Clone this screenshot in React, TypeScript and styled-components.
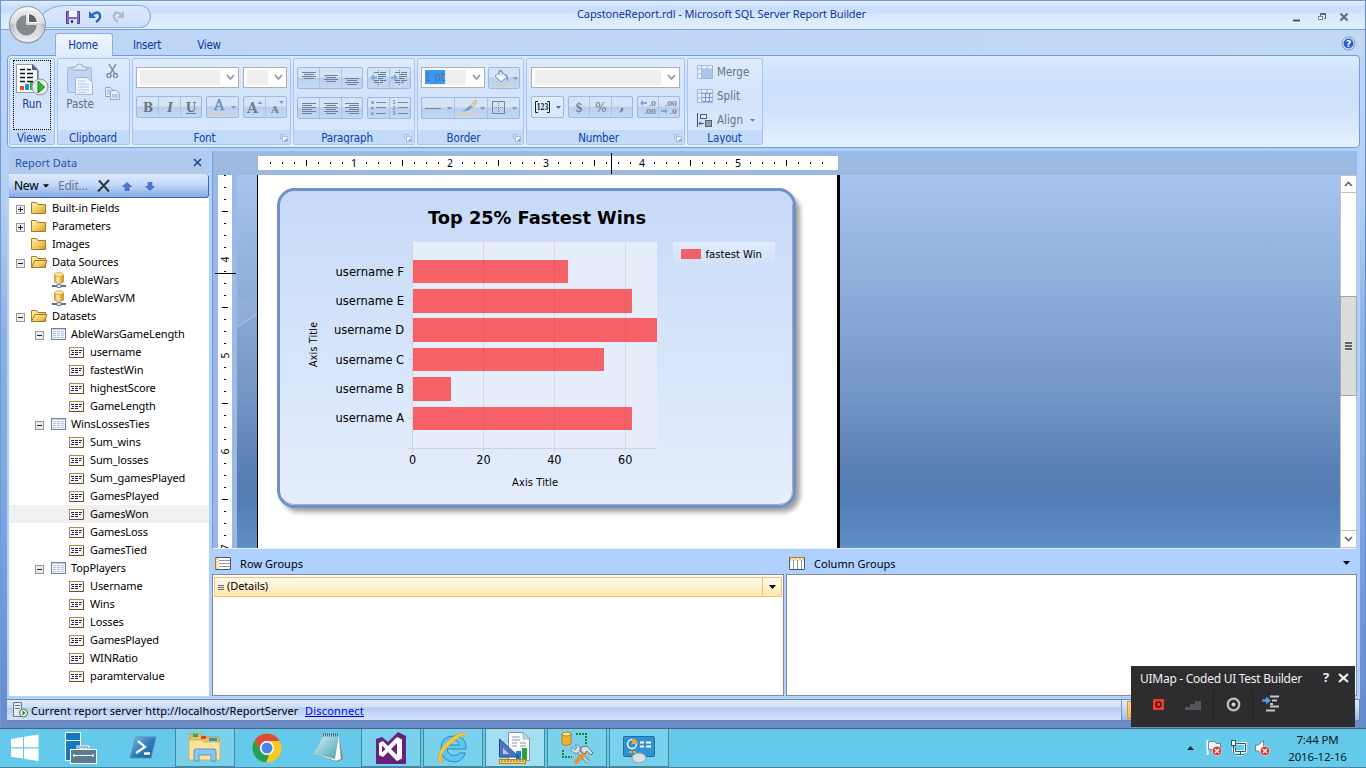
import React from "react";
import styled, { createGlobalStyle, css } from "styled-components";

const Global = createGlobalStyle`
  * { box-sizing: border-box; }
  html, body { margin: 0; padding: 0; }
  body { width: 1366px; height: 768px; overflow: hidden; }
  svg { display: block; flex: none; }
`;

const SEGOE = `"Noto Sans", "Open Sans", sans-serif`;
const TAHOMA = `"DejaVu Sans Condensed", "DejaVu Sans", sans-serif`;

const Screen = styled.div`
  width: 1366px;
  height: 768px;
  display: flex;
  flex-direction: column;
  font-family: ${SEGOE};
  font-size: 11px;
  color: #000;
  white-space: nowrap;
`;

const Window = styled.div`
  position: relative;
  height: 728px;
  display: flex;
  flex-direction: column;
  border-top: 1px solid #6f98dc;
  border-left: 1px solid #6f98dc;
  border-right: 1px solid #5f8bd0;
  background: linear-gradient(#c1d8f8 0, #bfd5f6 60px, #b3cff0 200px, #8fb2e3 330px, #7ea3dc 520px, #6b8dcb 700px);
`;

/* ---------- title bar and tabs ---------- */
const TitleBar = styled.div`
  height: 29px;
  display: flex;
  align-items: flex-start;
  border-bottom: 1px solid #7ba1e0;
  background: linear-gradient(#e4efff 0, #cbdffc 5px, #c9defb 10px, #d6e8fc 14px, #e2f0fd 28px);
`;
const QuickAccess = styled.div`
  width: 114px;
  height: 23px;
  margin: 4px 0 0 36px;
  padding: 4px 0 0 28px;
  display: flex;
  gap: 8px;
  border: 1px solid #8bb0e6;
  border-radius: 30px 12px 12px 0 / 22px 12px 12px 0;
  background: linear-gradient(#dbe9fc, #cfe1fa);
`;
const Title = styled.div`
  flex: 1;
  padding: 5px 0 0 0;
  margin-left: 426px;
  line-height: 15px;
  font-size: 11px;
  letter-spacing: -0.12px;
  color: #0d35a0;
`;
const Controls = styled.div`
  width: 73px;
  padding-top: 10px;
`;
const Orb = styled.div`
  position: absolute;
  left: 7px;
  top: 4px;
`;
const Tabs = styled.div`
  height: 25px;
  padding: 3px 9px 0 54px;
  display: flex;
  background: linear-gradient(90deg, #bed6f5, #c1d6f7 60%, #c3d9f3);
`;
const Tab = styled.div<{ $on?: boolean; $w: number }>`
  width: ${(p) => p.$w}px;
  height: 23px;
  padding-right: 2px;
  line-height: ${(p) => (p.$on ? 22 : 24)}px;
  text-align: center;
  font-family: ${TAHOMA};
  font-size: 11.5px;
  letter-spacing: -0.25px;
  color: #0d35a0;
  ${(p) =>
    p.$on &&
    css`
      position: relative;
      z-index: 1;
      border: 1px solid #8aaee6;
      border-bottom: 0;
      border-radius: 3px 3px 0 0;
      background: linear-gradient(#eef5fe, #e0ecfd);
    `}
`;
const HelpSlot = styled.div`
  margin: 3px 0 0 auto;
`;

/* ---------- ribbon ---------- */
const Ribbon = styled.div`
  height: 93px;
  margin: 0 5px 0 6px;
  padding: 2px 1px;
  display: flex;
  border: 1px solid #749bdc;
  border-radius: 4px;
  background: linear-gradient(#dbebfe 0, #cde2fc 20px, #cbe0fb 32px, #cfe3fd 55px, #dceafe 75px, #e4f0ff);
`;
const Group = styled.div<{ $w: number }>`
  width: ${(p) => p.$w}px;
  height: 87px;
  margin-right: 2px;
  display: flex;
  flex-direction: column;
  border: 1px solid #a4c5f5;
  border-radius: 2px;
  overflow: hidden;
  background: linear-gradient(#deebfd, #d2e3fa 45%, #dbe9fd);
`;
const GroupBody = styled.div<{ $pad?: string; $gap?: number }>`
  flex: 1;
  padding: ${(p) => p.$pad ?? "8px 3px 0"};
  display: flex;
  flex-direction: column;
  gap: ${(p) => p.$gap ?? 8}px;
`;
const GroupName = styled.div`
  height: 14px;
  display: flex;
  align-items: center;
  background: #c3daf9;
  font-family: ${TAHOMA};
  font-size: 11.5px;
  letter-spacing: -0.15px;
  color: #1440a8;
`;
const NameText = styled.span<{ $shift: number }>`
  flex: 1;
  padding: 3px ${(p) => p.$shift}px 0 0;
  line-height: 13px;
  text-align: center;
`;
const Row = styled.div<{ $gap?: number }>`
  display: flex;
  gap: ${(p) => p.$gap ?? 4}px;
`;
const Combo = styled.div<{ $w: number }>`
  width: ${(p) => p.$w}px;
  height: 21px;
  padding: 2px 3px 2px 3px;
  display: flex;
  align-items: center;
  justify-content: space-between;
  border: 1px solid #a9b0b8;
  background: #fff;
`;
const Field = styled.div<{ $w: number }>`
  width: ${(p) => p.$w}px;
  height: 15px;
  background: #efefef;
  font-family: ${TAHOMA};
  font-size: 11.5px;
  line-height: 14px;
  color: #6d7076;
`;
const Selected = styled.span`
  display: inline-block;
  width: 20px;
  height: 14px;
  letter-spacing: -0.1px;
  background: #3399ff;
`;
const ButtonSet = styled.div<{ $live?: boolean }>`
  display: flex;
  height: 22px;
  border: 1px solid #9bb9e3;
  border-radius: 2px;
  background: ${(p) =>
    p.$live ? "linear-gradient(#e4effd, #d9e7fb)" : "linear-gradient(#d6e5f6 0, #d6e5f6 45%, #b8cfec 50%, #c5d9f3)"};
`;
const Tool = styled.div<{ $w: number; $gap?: number }>`
  width: ${(p) => p.$w}px;
  display: flex;
  align-items: center;
  justify-content: center;
  gap: ${(p) => p.$gap ?? 0}px;
  border-right: 1px solid #a9c4e8;
  &:last-child { border-right: 0; }
`;
const BigTool = styled.div<{ $focus?: boolean; $w: number }>`
  width: ${(p) => p.$w}px;
  height: 70px;
  padding-top: 2px;
  display: flex;
  flex-direction: column;
  align-items: center;
  border: 1px ${(p) => (p.$focus ? "dotted #000" : "solid transparent")};
`;
const ToolCaption = styled.div<{ $dim?: boolean }>`
  font-family: ${TAHOMA};
  font-size: 11.5px;
  letter-spacing: -0.1px;
  line-height: 15px;
  color: ${(p) => (p.$dim ? "#65707f" : "#1440a8")};
`;
const LayoutItem = styled.div`
  height: 16px;
  display: flex;
  align-items: center;
  gap: 4px;
  font-family: ${TAHOMA};
  font-size: 11.5px;
  letter-spacing: 0;
  color: #6b7280;
`;

/* ---------- work area ---------- */
const Work = styled.div`
  height: 551px;
  margin: 0 5px 0 6px;
  padding: 3px 3px 3px 2px;
  display: flex;
  background: #aed1ff;
`;
const DataPanel = styled.div`
  width: 200px;
  height: 545px;
  display: flex;
  flex-direction: column;
  background: #fff;
`;
const PanelHead = styled.div`
  height: 23px;
  padding: 0 7px 0 6px;
  display: flex;
  align-items: center;
  justify-content: space-between;
  background: #b1caee;
  font-size: 11px;
  color: #2253b5;
`;
const PanelTools = styled.div`
  height: 24px;
  padding-left: 5px;
  display: flex;
  align-items: center;
  border-bottom: 1px solid #3c66b4;
  border-right: 1px solid #3c66b4;
  border-radius: 3px 3px 3px 0;
  background: linear-gradient(#dfeafc, #c4d9f8 45%, #86aae4);
  font-size: 12px;
`;
const Dim = styled.span`
  width: 39px;
  margin-left: 9px;
  letter-spacing: -0.25px;
  color: #6d7787;
`;
const NewLabel = styled.span`
  width: 29px;
  letter-spacing: -0.25px;
`;
const Tree = styled.div`
  padding-top: 1px;
`;
const Node = styled.div<{ $depth: number; $sel?: boolean }>`
  height: 18px;
  padding-left: ${(p) => 7 + p.$depth * 19}px;
  display: flex;
  align-items: center;
  background: ${(p) => (p.$sel ? "#f0f0f0" : "transparent")};
`;
const Twist = styled.div<{ $w: number }>`
  width: ${(p) => p.$w}px;
  height: 9px;
  margin-top: 3px;
`;
const NodeIcon = styled.div<{ $w: number }>`
  width: ${(p) => p.$w}px;
`;
const NodeText = styled.span`
  font-size: 11px;
  letter-spacing: -0.12px;
  line-height: 16px;
`;

const Main = styled.div`
  width: 1145px;
  margin-left: 3px;
  display: flex;
  flex-direction: column;
`;
const Designer = styled.div`
  height: 398px;
  display: flex;
  flex-direction: column;
  border-left: 1px solid #6f9adb;
  border-bottom: 1px solid #e4effb;
`;
const TopRuler = styled.div`
  height: 24px;
  padding-left: 45px;
  background: #9bb9e1;
`;
const Canvas = styled.div`
  height: 373px;
  display: flex;
`;
const SideRuler = styled.div`
  width: 24px;
  background: #9bb9e1;
`;
const Surface = styled.div`
  flex: 1;
  display: flex;
  overflow: hidden;
  background: linear-gradient(#a6c6ef 0, #9bbbe6 50px, #87a8d6 140px, #7195c5 225px, #5a80b6 290px, #527db4 325px, #5882bb 342px, #6090c6 373px);
`;
const Margin = styled.div`
  width: 20px;
  padding-top: 112px;
`;
const Paper = styled.div`
  width: 583px;
  border-left: 1px solid #000;
  border-right: 3px solid #000;
  background: #fff;
`;
const Scroll = styled.div`
  width: 17px;
  display: flex;
  flex-direction: column;
  border: 1px solid #c3c3c3;
  background: #fff;
`;
const ScrollEnd = styled.div`
  height: 16px;
  display: flex;
  align-items: center;
  justify-content: center;
`;
const ScrollTrack = styled.div`
  flex: 1;
  padding-top: 103px;
  border-top: 1px solid #c3c3c3;
  border-bottom: 1px solid #c3c3c3;
`;
const Thumb = styled.div`
  height: 100px;
  display: flex;
  align-items: center;
  justify-content: center;
  border: 1px solid #a6a6a6;
  margin: 0 -1px;
  background: #dcdcdc;
`;

const Groups = styled.div`
  flex: 1;
  display: flex;
  gap: 2px;
`;
const GroupPane = styled.div<{ $w: number }>`
  width: ${(p) => p.$w}px;
  display: flex;
  flex-direction: column;
`;
const PaneHead = styled.div`
  height: 25px;
  padding: 3px 7px 0 3px;
  display: flex;
  align-items: center;
  font-size: 11px;
`;
const PaneTitle = styled.span`
  flex: 1;
  margin-left: 9px;
  letter-spacing: 0.05px;
`;
const PaneBox = styled.div`
  flex: 1;
  padding: 2px 1px;
  border: 1px solid #848a96;
  background: #fff;
`;
const DetailRow = styled.div`
  height: 20px;
  display: flex;
  align-items: center;
  border: 1px solid #fdc06c;
  background: linear-gradient(#fffaf0, #fef1d0 50%, #ffe8ae);
`;
const DetailText = styled.span`
  flex: 1;
  margin-top: -3px;
  font-size: 11px;
  letter-spacing: -0.1px;
`;
const DropCell = styled.div`
  width: 19px;
  height: 18px;
  display: flex;
  align-items: center;
  justify-content: center;
  border-left: 1px solid #fdc06c;
`;

const Status = styled.div`
  height: 22px;
  margin: 0 5px 0 5px;
  padding-left: 5px;
  display: flex;
  align-items: center;
  border: 1px solid #7385aa;
  background: linear-gradient(#dfeafb 0, #cfe0f9 7px, #b5cdf2 8px, #d3e2fa 20px);
  font-size: 11px;
`;
const StatusText = styled.span`
  width: 277px;
  padding-left: 3px;
  letter-spacing: 0.06px;
`;
const StatusLink = styled.span`
  color: #0000f0;
  letter-spacing: 0.18px;
  text-decoration: underline;
`;
const ZoomEdge = styled.div`
  width: 238px;
  height: 20px;
  margin-left: auto;
  border-left: 1px solid #7792c4;
  background: linear-gradient(#e4eefd, #9dbcf0);
`;
const Amber = styled.div`
  width: 30px;
  height: 18px;
  margin: 1px 0 0 5px;
  border: 1px solid #c79a4c;
  background: linear-gradient(#fbd79a, #f7ac42);
`;

/* ---------- floating recorder ---------- */
const Recorder = styled.div`
  position: absolute;
  left: 1131px;
  top: 666px;
  width: 224px;
  height: 61px;
  display: flex;
  flex-direction: column;
  background: #2d2d30;
  color: #f1f1f1;
`;
const RecorderHead = styled.div`
  height: 23px;
  padding: 1px 6px 0 9px;
  display: flex;
  align-items: center;
  font-size: 12px;
`;
const RecorderName = styled.span`
  flex: 1;
  letter-spacing: -0.27px;
`;
const Bold = styled.b`
  width: 15px;
  font-size: 13px;
  line-height: 20px;
  margin-top: -2px;
`;
const RecorderTools = styled.div`
  height: 30px;
  display: flex;
  align-items: center;
`;
const RecCell = styled.div<{ $w: number; $line?: boolean; $pad: number }>`
  width: ${(p) => p.$w}px;
  height: 31px;
  padding-left: ${(p) => p.$pad}px;
  display: flex;
  align-items: center;
  border-right: 1px solid ${(p) => (p.$line ? "#222224" : "transparent")};
`;

/* ---------- taskbar ---------- */
const Taskbar = styled.div`
  height: 40px;
  display: flex;
  border-top: 1px solid #4d646e;
  border-bottom: 1px solid #4a8298;
  background: #64c9ea;
`;
const Start = styled.div`
  width: 51px;
  padding-left: 11px;
  display: flex;
  align-items: center;
`;
const TaskButton = styled.div<{ $state?: "open" | "active" }>`
  width: 60px;
  margin-right: 2px;
  display: flex;
  align-items: center;
  justify-content: center;
  ${(p) =>
    p.$state &&
    css`
      border: 1px solid #46899f;
      border-top: 0;
      background: ${p.$state === "active" ? "#a2dff3" : "#79d1ec"};
    `}
`;
const Tray = styled.div`
  margin-left: auto;
  display: flex;
  align-items: center;
`;
const Clock = styled.div`
  width: 83px;
  margin-left: 5px;
  padding-right: 14px;
  text-align: center;
  font-size: 11.5px;
  line-height: 17px;
  letter-spacing: -0.15px;
  color: #0c1a20;
`;

/* ---------- small drawings ---------- */
const Chevron = ({ c = "#9a9a9a" }: { c?: string }) => (
  <svg width="9" height="7" viewBox="0 0 9 7"><path d="M1 1l3.5 4L8 1" fill="none" stroke={c} strokeWidth="1.8" /></svg>
);
const Down = ({ c = "#7f9cc9", w = 5 }: { c?: string; w?: number }) => (
  <svg width={w} height={w === 5 ? 3 : 4} viewBox="0 0 6 3.4"><path d="M0 0h6L3 3.4z" fill={c} /></svg>
);
const Launcher = () => (
  <svg width="11" height="9" viewBox="0 0 11 9">
    <path d="M1.5 6V1.5H6" fill="none" stroke="#9fbce4" />
    <path d="M3.5 3.5h5v5h-5z" fill="#f5f9ff" stroke="#9fbce4" />
    <path d="M5 8h3V5z" fill="#93a9cc" />
  </svg>
);
const Lines = ({ y, a = "c" }: { y: number[]; a?: string }) => (
  <svg width="16" height="16" viewBox="0 0 16 16">
    {y.map((v, i) => {
      const w = i % 2 === 0 ? 14 : 10;
      const x = a === "l" ? 1 : a === "r" ? 15 - w : (16 - w) / 2;
      return <rect key={v} x={x} y={v} width={w} height="1" fill="#6f7f99" />;
    })}
  </svg>
);
const Indent = ({ out }: { out?: boolean }) => (
  <svg width="18" height="16" viewBox="0 0 18 16">
    <path d="M4 2.500h4m2 0h6M9 4.500h7M9 6.500h7M9 8.500h4M4 10.500h4m2 0h6M4 12.500h4m2 0h3" stroke="#69798f" />
    <path d="M8.500 0v16" stroke="#69798f" strokeDasharray="1 1" />
    <path d={out ? "M0 7.500l4-3.500v2.500h3v2H4v2.500z" : "M7 7.500l-4-3.500v2.500H0v2h3v2.500z"} fill="#86a8dd" />
  </svg>
);
const List = ({ num }: { num?: boolean }) => (
  <svg width="17" height="18" viewBox="0 0 17 18">
    <path d="M6 3.500h10M6 8.500h10M6 14.500h10" stroke="#75859c" />
    {[3.500, 9, 14.500].map((y, i) =>
      num ? (
        <text key={y} x="0.500" y={y + 1.700} fontSize="5.300" fontWeight="bold" fontFamily="Liberation Sans" fill="#6c90cc">{i + 1}</text>
      ) : (
        <circle key={y} cx="2.500" cy={y} r="1.500" fill="#7a9cd3" />
      )
    )}
  </svg>
);
const Glyph = ({ t, style, u }: { t: string; style?: string; u?: boolean }) => (
  <svg width="16" height="18" viewBox="0 0 16 18">
    <text x="8" y="13.500" textAnchor="middle" fontFamily="DejaVu Serif" fontSize="12" fontWeight={t === "%" || t === "$" ? "normal" : "bold"} fontStyle={style} fill="#667387">{t}</text>
    {u && <path d="M3 15.500h10" stroke="#6f7c90" />}
  </svg>
);
const Comma = () => (
  <svg width="16" height="20" viewBox="0 0 16 20">
    <text x="8" y="13" textAnchor="middle" fontFamily="DejaVu Serif" fontSize="14" fontWeight="bold" fill="#667387">,</text>
  </svg>
);
const FontStep = ({ up }: { up?: boolean }) => (
  <svg width="17" height="18" viewBox="0 0 17 18">
    <text x={up ? 6.5 : 7} y="15" textAnchor="middle" fontFamily="DejaVu Serif" fontSize={up ? 14 : 10} fontWeight="bold" fill="#6f7c90">A</text>
    <path d={up ? "M11.500 6h5l-2.500-3z" : "M11 3h5l-2.500 3z"} fill="#7f9fd4" />
  </svg>
);
const FontColor = () => (
  <svg width="20" height="20" viewBox="0 0 20 20">
    <text x="10" y="13" textAnchor="middle" fontFamily="DejaVu Serif" fontSize="14" fill="#6c8cc5" stroke="#6c8cc5" strokeWidth=".4">A</text>
    <rect x="1" y="15" width="17" height="4" fill="#cfd0d2" />
  </svg>
);
const Bucket = () => (
  <svg width="20" height="20" viewBox="0 0 20 20">
    <path d="M4 8l6-5 6 6-6 5z" fill="#eef3fa" stroke="#8192ac" />
    <path d="M8 7V3q1.500-2 3 0v4" fill="none" stroke="#8192ac" />
    <path d="M13 6q5 0 4 7-2-1-1-4z" fill="#6d93cf" />
    <rect x="1" y="15" width="17" height="4" fill="#cfd0d2" />
  </svg>
);
const Brush = () => (
  <svg width="20" height="20" viewBox="0 0 20 20">
    <path d="M12 8l5-6 2 1-4 7z" fill="#e8d39a" stroke="#b3a376" strokeWidth=".6" />
    <path d="M2 13q5 0 7-3 3-4 5-1-2 5-12 4z" fill="#7398d6" />
    <rect x="1" y="14" width="17" height="4" fill="#cfd0d2" />
  </svg>
);
const Border = () => (
  <svg width="16" height="16" viewBox="0 0 16 16">
    <rect x="1.500" y="1.500" width="12" height="12" fill="none" stroke="#75859c" />
    <path d="M7.500 3v10M3 7.500h10" stroke="#75859c" strokeDasharray="1 1" />
  </svg>
);
const Decimals = ({ grow }: { grow?: boolean }) => (
  <svg width="18" height="20" viewBox="0 0 18 20" fontFamily="DejaVu Serif" fontSize="7" fontWeight="bold" fill="#808a9a">
    <text x="17" y="8.500" textAnchor="end">{grow ? ".0" : ".00"}</text>
    <text x="17" y="17" textAnchor="end">{grow ? ".00" : ".0"}</text>
    <path d={grow ? "M1 6l3-3v2h4v2H4v2z" : "M8 14l-3-3v2H1v2h4v2z"} fill="#83a4dc" />
  </svg>
);
const Bracket = () => (
  <svg width="18" height="16" viewBox="0 0 18 16">
    <path d="M4 2.500H1.500v11H4M13 2.500h2.500v11H13" fill="none" stroke="#16202e" />
    <text x="8.500" y="11" textAnchor="middle" fontFamily="DejaVu Serif" fontSize="8.500" fontWeight="bold" fill="#16202e" textLength="11.500" lengthAdjust="spacingAndGlyphs">123</text>
  </svg>
);

const ReportRun = () => (
  <svg width="34" height="34" viewBox="1 0 34 34">
    <path d="M2.500 1.500h17l4 5v23h-21z" fill="#fbfdff" stroke="#8a9db5" />
    <path d="M18 1v6h6z" fill="#50627a" />
    <path d="M24 7v20" stroke="#53657d" />
    <path d="M6 6.500h5M13 6.500h4M6 10.500h5M13 10.500h6M6 14.500h5M13 14.500h6M6 18.500h5M13 18.500h6" stroke="#111" strokeWidth="1.600" />
    <rect x="6" y="23" width="4" height="4" fill="#f04a1d" /><rect x="11" y="21" width="4" height="6" fill="#1c8df0" /><rect x="16" y="19" width="4" height="8" fill="#2fb52c" />
    <circle cx="26" cy="24" r="8" fill="#e6e9ec" stroke="#8f979f" />
    <path d="M24 18v12l6.500-6z" fill="#38b52e" stroke="#187a1b" />
  </svg>
);
const PasteIcon = () => (
  <svg width="28" height="34" viewBox="0 0 28 34">
    <rect x="1.500" y="4.500" width="24" height="25" rx="1" fill="#c0d5f2" stroke="#a2bbdf" />
    <path d="M6 7V4h4q0-3 3.500-3T17 4h4v3z" fill="#dfe9f7" stroke="#94abca" />
    <path d="M9.500 14.500h11l6 5v12h-17z" fill="#eef4fd" stroke="#9fb6d8" />
    <path d="M12 18h7M12 21h11M12 24h11M12 27h11M12 29.500h8" stroke="#b6cbe8" />
  </svg>
);
const Cut = () => (
  <svg width="16" height="15" viewBox="0 0 16 15" fill="none" stroke="#8494ae" strokeWidth="1.500">
    <path d="M5 0l6 10M12 0L6 10" /><circle cx="5" cy="11.500" r="2" /><circle cx="11.500" cy="11.500" r="2" />
  </svg>
);
const CopyIcon = () => (
  <svg width="16" height="14" viewBox="0 0 16 14" fill="#e5eefb" stroke="#93a9cb">
    <path d="M1.500.5h5l2 2v7h-7z" /><path d="M6.500 3.500h6l3 3v6h-9z" /><path d="M8 8h6M8 10h6M3 3h3M3 5h3M3 7h3" />
  </svg>
);
const MergeIcon = ({ split }: { split?: boolean }) => (
  <svg width="16" height="14" viewBox="0 0 16 14">
    <path d="M.5.500h15v13H.5zM.5 4h15M4.500.5v13M10 .500V4M.5 9h4" fill="#e8f0fb" stroke="#9fb7dc" />
    <rect x="5" y="4" width="10" height="9" fill={split ? "#dce9fb" : "#a9c6f0"} />
    {split && <path d="M5 4.500h10M5 8.500h10M5 12.500h10M8.500 4v9M12.500 4v9" stroke="#7797cf" />}
  </svg>
);
const AlignIcon = () => (
  <svg width="16" height="15" viewBox="0 0 16 15">
    <path d="M.5 0v14" stroke="#444c5a" /><rect x="3.500" y="1.500" width="6" height="4" fill="#e7eaf0" stroke="#555e6d" />
    <rect x="8.500" y="7.500" width="6" height="6" fill="#9aa1ac" stroke="#555e6d" /><path d="M2 10.500h5M4 8.500l-2 2 2 2" fill="none" stroke="#4a5668" />
  </svg>
);

/* ---------- tree icons ---------- */
const Folder = ({ open }: { open?: boolean }) => (
  <svg width="17" height="14" viewBox="0 0 17 14">
    <defs><linearGradient id="fold" x2="1" y2="1"><stop stopColor="#fff1ae" /><stop offset=".55" stopColor="#f1cb5d" /><stop offset="1" stopColor="#d29a26" /></linearGradient></defs>
    <path d="M.500 12.500v-11h5l1.500 2h7.500v9z" fill="url(#fold)" stroke="#a87a25" />
    {open && <path d="M.5 12.500L4 5.500h12l-2.500 7z" fill="url(#fold)" stroke="#a87a25" />}
  </svg>
);
const Database = () => (
  <svg width="16" height="16" viewBox="0 0 16 16">
    <defs><linearGradient id="cyl"><stop stopColor="#dc9a20" /><stop offset=".35" stopColor="#fff0a8" /><stop offset="1" stopColor="#d08a12" /></linearGradient></defs>
    <path d="M3.500 3v7q4 3 9 0V3z" fill="url(#cyl)" stroke="#b97a14" strokeWidth=".6" /><ellipse cx="8" cy="2.500" rx="4.500" ry="2" fill="#ffe79a" stroke="#c58a22" strokeWidth=".6" />
    <path d="M1 14h14" stroke="#59708f" strokeWidth="2" /><path d="M6 12.500h4v3H6z" fill="#dce6f2" stroke="#59708f" strokeWidth=".8" />
  </svg>
);
const TableIcon = () => (
  <svg width="15" height="12" viewBox="0 0 15 12">
    <rect x=".5" y=".5" width="14" height="11" fill="#f4f8fe" stroke="#6f83a5" /><path d="M1 1.500h13" stroke="#c3d3ec" />
    <path d="M2 3.500h3m1 0h3m1 0h3M2 5.500h3m1 0h3m1 0h3M2 7.500h3m1 0h3m1 0h3M2 9.500h3m1 0h3m1 0h3" stroke="#b4c3dc" />
  </svg>
);
const FieldIcon = () => (
  <svg width="15" height="11" viewBox="0 0 15 11">
    <rect x=".5" y=".5" width="14" height="10" fill="#fdf6e0" stroke="#a08d63" /><path d="M.5 10.500h14V1" fill="none" stroke="#5e5238" />
    <path d="M2 3.500h3m1 0h3m1 0h3M3 5.500h2m1 0h3m1 0h2M2 7.500h3m1 0h3" stroke="#1b1b8c" />
  </svg>
);
const Box = ({ plus }: { plus?: boolean }) => (
  <svg width="9" height="9" viewBox="0 0 9 9">
    <rect x=".5" y=".5" width="8" height="8" fill="#ececec" stroke="#989898" /><path d="M2 4.500h5" stroke="#222" />{plus && <path d="M4.500 2v5" stroke="#222" />}
  </svg>
);

type Kind = "folder" | "open" | "db" | "table" | "field";
const tree: [number, Kind, string, string?][] = [
  [0, "folder", "Built-in Fields", "+"], [0, "folder", "Parameters", "+"], [0, "folder", "Images"],
  [0, "open", "Data Sources", "-"], [1, "db", "AbleWars"], [1, "db", "AbleWarsVM"],
  [0, "open", "Datasets", "-"], [1, "table", "AbleWarsGameLength", "-"],
  [2, "field", "username"], [2, "field", "fastestWin"], [2, "field", "highestScore"], [2, "field", "GameLength"],
  [1, "table", "WinsLossesTies", "-"], [2, "field", "Sum_wins"], [2, "field", "Sum_losses"], [2, "field", "Sum_gamesPlayed"],
  [2, "field", "GamesPlayed"], [2, "field", "GamesWon"], [2, "field", "GamesLoss"], [2, "field", "GamesTied"],
  [1, "table", "TopPlayers", "-"], [2, "field", "Username"], [2, "field", "Wins"], [2, "field", "Losses"],
  [2, "field", "GamesPlayed"], [2, "field", "WINRatio"], [2, "field", "paramtervalue"],
];
const kindIcon: Record<Kind, React.ReactNode> = {
  folder: <Folder />, open: <Folder open />, db: <Database />, table: <TableIcon />, field: <FieldIcon />,
};

/* ---------- rulers and chart ---------- */
const HorizontalRuler = () => (
  <svg width="580" height="24" viewBox="258 151 580 24" shapeRendering="crispEdges">
    <rect x="258" y="156" width="580" height="14" fill="#fff" />
    {Array.from({ length: 47 }, (_, i) => i + 1).map((i) => {
      const x = 258 + i * 12;
      if (i % 8 === 0) return <text key={i} x={x} y="167" textAnchor="middle" fontFamily="Noto Sans" fontSize="10.500">{i / 8}</text>;
      return i % 4 === 0 ? <rect key={i} x={x} y="160" width="1" height="6" /> : <rect key={i} x={x} y="162" width="1" height="2" />;
    })}
    <rect x="611" y="153" width="1" height="21" />
  </svg>
);
const VerticalRuler = () => (
  <svg width="24" height="373" viewBox="213 175 24 373" shapeRendering="crispEdges">
    <rect x="218" y="175" width="14" height="373" fill="#fff" />
    {Array.from({ length: 32 }, (_, i) => i - 7).map((i) => {
      const y = 259 + i * 12;
      if (i % 8 === 0)
        return <text key={i} transform={`translate(229 ${y + 0.5}) rotate(-90)`} textAnchor="middle" fontFamily="Noto Sans" fontSize="10.500">{4 + i / 8}</text>;
      return i % 4 === 0 ? <rect key={i} x="222" y={y} width="6" height="1" /> : <rect key={i} x="224" y={y} width="2" height="1" />;
    })}
    <rect x="215" y="273" width="21" height="1" />
  </svg>
);
const Streaks = () => (
  <svg width="20" height="80" viewBox="237 287 20 80">
    <path d="M237 301l20-9v24l-20 11z" fill="#fff" opacity=".06" />
    <path d="M237 327l20-13" stroke="#fff" strokeWidth="1.500" opacity=".18" />
  </svg>
);

const bars = [
  { n: "username F", y: 260, h: 23, e: 568, t: 276 }, { n: "username E", y: 289, h: 24, e: 632, t: 305 }, { n: "username D", y: 318, h: 24, e: 657, t: 334 },
  { n: "username C", y: 348, h: 23, e: 604, t: 364 }, { n: "username B", y: 377, h: 24, e: 451, t: 393 }, { n: "username A", y: 407, h: 23, e: 632, t: 422 },
];
const Chart = () => (
  <svg width="579" height="373" viewBox="258 175 579 373" fontFamily="DejaVu Sans Condensed">
    <defs>
      <linearGradient id="card" x2="0" y2="1"><stop stopColor="#c6daf8" /><stop offset="1" stopColor="#e6eefc" /></linearGradient>
      <linearGradient id="legend" x2="0" y2="1"><stop stopColor="#e3ecfc" /><stop offset="1" stopColor="#cddff9" /></linearGradient>
      <filter id="soft" x="-5%" y="-5%" width="112%" height="112%"><feGaussianBlur stdDeviation="2.400" /></filter>
    </defs>
    <rect x="282" y="194" width="518" height="318" rx="17" fill="#000" opacity=".38" filter="url(#soft)" />
    <rect x="278.500" y="189.500" width="516" height="317" rx="16" fill="url(#card)" stroke="#6f90cb" strokeWidth="3" />
    <path d="M792.500 204v286q0 14.500-14.500 14.500H296q-10 0-14-7" fill="none" stroke="#8592a8" strokeWidth="1" opacity=".7" />
    <text x="428" y="224" fontFamily="DejaVu Sans" fontWeight="bold" fontSize="18.500" textLength="218" lengthAdjust="spacingAndGlyphs">Top 25% Fastest Wins</text>
    <rect x="412" y="242" width="245" height="206" fill="#e6edfb" />
    <g shapeRendering="crispEdges">
      {bars.map((b) => <rect key={b.n} x="413" y={b.y} width={b.e - 413} height={b.h} fill="#f66167" />)}
      {[483, 554, 625].map((x) => <rect key={x} x={x} y="242" width="1" height="210" fill="#6b4a3c" opacity=".12" />)}
      <rect x="412" y="242" width="1" height="210" fill="#d2d3d6" /><rect x="408" y="448" width="249" height="1" fill="#d2d3d6" /><rect x="408" y="242" width="4" height="1" fill="#d2d3d6" />
      {bars.map((b) => <rect key={b.n} x="408" y={b.y + 11} width="4" height="1" fill="#d2d3d6" />)}
    </g>
    {bars.map((b) => (
      <text key={b.n} x="404" y={b.t} textAnchor="end" fontSize="12.500" textLength={b.n.endsWith("D") ? 70 : 68.5} lengthAdjust="spacingAndGlyphs">{b.n}</text>
    ))}
    {[0, 20, 40, 60].map((v, i) => <text key={v} x={412.500 + i * 70.900} y="464" textAnchor="middle" fontSize="12.500">{v}</text>)}
    <text x="512" y="486" fontSize="11" textLength="46">Axis Title</text>
    <text transform="translate(317 367) rotate(-90)" fontSize="10.500" textLength="45">Axis Title</text>
    <rect x="673" y="242" width="102" height="25" fill="url(#legend)" />
    <rect x="681" y="249" width="20" height="10" fill="#f06068" />
    <text x="705.500" y="258" fontSize="11" textLength="56.500" lengthAdjust="spacingAndGlyphs">fastest Win</text>
  </svg>
);

const PaneIcon = ({ cols }: { cols?: boolean }) => (
  <svg width="16" height="13" viewBox="0 0 16 13">
    <rect width="16" height="13" fill="#fff" />
    {cols ? <><path d="M4.500 3v10M8.500 3v10M12.500 3v10" stroke="#8d96a4" /><path d="M1 2h15" stroke="#eed08a" strokeWidth="3" strokeDasharray="3 1" /></>
      : <><path d="M4 3.500h12M4 6.500h12M4 9.500h12" stroke="#8d96a4" /><path d="M2 1v12" stroke="#eed08a" strokeWidth="3" strokeDasharray="2 1" /></>}
    <path d={cols ? "M.5 0v12.500h15V0" : "M0 .500h15.500v12H0"} fill="none" stroke="#4c5667" />
    <path d={cols ? "M0 .5h16" : "M.5 0v13"} stroke="#a87f2e" />
  </svg>
);

/* ---------- taskbar icons ---------- */
const WinLogo = () => (
  <svg width="28" height="28" viewBox="0 0 28 28" fill="#fff"><path d="M0 5l12-2v10.300H0zM13 2.800L27.500.5v12.800H13zM0 14.500h12V24.500L0 22.800zM13 14.500h14.500v12.500L13 24.800z" /></svg>
);
const ServerIcon = () => (
  <svg width="32" height="34" viewBox="0 0 32 34">
    <path d="M.5 1.500h15v28H.5z" fill="#1478be" stroke="#fff" /><path d="M1 9.500h14" stroke="#fff" />
    <path d="M13 19v-3h10v3" fill="none" stroke="#fff" strokeWidth="3" /><path d="M13 19v-3h10v3" fill="none" stroke="#5d7b8f" />
    <rect x="5.500" y="18.500" width="26" height="14" fill="#5d7b8f" stroke="#fff" /><path d="M8 24.500h21M9 23v3M28 23v3" stroke="#fff" />
  </svg>
);
const PowerShell = () => (
  <svg width="28" height="26" viewBox="0 0 28 26">
    <defs><linearGradient id="ps" x2="1" y2="1"><stop stopColor="#8fc1e6" /><stop offset=".5" stopColor="#2f7cbb" /><stop offset="1" stopColor="#1d5c9a" /></linearGradient></defs>
    <path d="M7 2h20l-5 21H1z" fill="url(#ps)" stroke="#5b8fb8" /><path d="M9 6l7 6-9 6M15 18.500h6" fill="none" stroke="#fff" strokeWidth="2.300" />
  </svg>
);
const Explorer = () => (
  <svg width="34" height="32" viewBox="0 0 34 32">
    <path d="M2 7V2h11l2 3h16v20H2z" fill="#e6c467" stroke="#c5973d" /><path d="M5 2h5v3H5z" fill="#2bae36" /><path d="M13 4h5v3h-5z" fill="#d64b2a" /><path d="M21 6h8v3h-8z" fill="#2e8fdd" />
    <path d="M1 8h13l2 2h16v18H1z" fill="#f8e49c" stroke="#d6b45b" /><path d="M6 29V19q0-2 2-2h18q2 0 2 2v10h-5v-6H11v6z" fill="#8fc7ee" stroke="#4e98cc" />
  </svg>
);
const Chrome = () => (
  <svg width="30" height="30" viewBox="0 0 30 30">
    <circle cx="15" cy="15" r="14.500" fill="#f7c922" /><path d="M2.500 7.500A14.500 14.500 0 0127.600 8H15a7 7 0 00-6.100 10.500z" fill="#dd4b3a" /><path d="M2.500 7.500L9 18.500A7 7 0 0017 21.700L14 29.500A14.500 14.500 0 012.500 7.500z" fill="#22a05a" />
    <circle cx="15" cy="15" r="7" fill="#fff" /><circle cx="15" cy="15" r="5.500" fill="#4a86e8" />
  </svg>
);
const Notepad = () => (
  <svg width="32" height="32" viewBox="0 0 32 32">
    <defs><linearGradient id="np" x2="1" y2="1"><stop stopColor="#d8f0f4" /><stop offset="1" stopColor="#4ba0b5" /></linearGradient></defs>
    <path d="M26 4l4 23-6 3-21-7z" fill="#8f7f63" /><path d="M11 3h15l2 24-5 2L1 22z" fill="#fff" stroke="#8bb1ba" strokeWidth=".6" /><path d="M11 3h15l-4 24L1 22z" fill="url(#np)" /><path d="M10 3h16" stroke="#536168" strokeWidth="3" strokeDasharray="1 1" />
  </svg>
);
const VisualStudio = () => (
  <svg width="30" height="32" viewBox="0 0 30 32"><path d="M0 7l6-2 6 5L22 0l8 4v28H0z" fill="#68217a" /><path d="M3 11l4-2 5 5 9-9 5 2.500v19L21 29l-9-9-5 5-4-2z" fill="#fff" /><path d="M6 13.500v7l3.500-3.500zM15 17l6-6v12z" fill="#68217a" /></svg>
);
const IE = () => (
  <svg width="34" height="32" viewBox="0 0 34 32">
    <path d="M30 17H11q1 6.500 7 6.500 4 0 5.500-2.500h6Q26 30 18 30 5 29 5 16.500T18 4q13 1 12 13zM11 13h12.500q-1-5-6-5T11 13z" fill="#5cc9f3" stroke="#1c86c0" strokeWidth=".9" />
    <path d="M27 7q4-5 1-6-6-1-16 8T2 28q2 4 8-.5-5 2-5-1 1-7 9-14T27 3q2 0 0 4z" fill="#f6ca3c" stroke="#d39b1c" strokeWidth=".6" />
  </svg>
);
const Builder = () => (
  <svg width="34" height="34" viewBox="0 0 34 34">
    <path d="M10.500 1.500h15l6 6v22h-21z" fill="#fafcff" stroke="#7d93ad" /><path d="M25 1v7h7z" fill="#c4d4e5" stroke="#7d93ad" strokeWidth=".6" /><path d="M14 6h8M14 9h8M14 12h5m3 0h6M14 15h5m3 0h6" stroke="#8797a9" />
    <rect x="18" y="20" width="5" height="9" fill="#1584dc" /><rect x="24" y="17" width="5" height="12" fill="#28a62f" /><path d="M1.500 8v18H21z" fill="#4f74c4" stroke="#27448e" /><path d="M5 17v6h6z" fill="#b4cdf0" />
    <rect x="1.500" y="28.500" width="26" height="4" fill="#f6cf5f" stroke="#ae8326" /><path d="M4 29v2M7 29v2M10 29v2M13 29v2M16 29v2M19 29v2M22 29v2M25 29v2" stroke="#8e6a1e" />
  </svg>
);
const Tools = () => (
  <svg width="34" height="34" viewBox="0 0 34 34">
    <path d="M2 3v10q4 3 9 0V3z" fill="#eeb02f" stroke="#b7801a" /><ellipse cx="6.500" cy="3" rx="4.500" ry="2" fill="#fde59a" stroke="#b7801a" /><path d="M16 3h10v10M3 19v7h9" fill="none" stroke="#1a8a30" strokeWidth="2" strokeDasharray="2 1" />
    <path d="M16 18l12 13" stroke="#7f8b99" strokeWidth="4.500" /><path d="M16 18l12 13" stroke="#c6cfd8" strokeWidth="2.500" /><path d="M12 16l3 3 2-3-2-2q5-1 5 4t-5 4-3-6z" fill="#d7dee6" stroke="#73808e" strokeWidth=".8" /><path d="M26 21L15 32" stroke="#df9530" strokeWidth="4" /><path d="M21 16l6-1 6 7-2 2-4-4-3 3-3-3z" fill="#d7dee6" stroke="#65727f" />
  </svg>
);
const Panel = () => (
  <svg width="32" height="30" viewBox="0 0 32 30">
    <rect x=".5" y="3.500" width="31" height="20" rx="1" fill="#2e93cf" stroke="#1d6da4" /><circle cx="9" cy="11" r="4.500" fill="none" stroke="#e8f5fb" strokeWidth="1.500" /><path d="M9 11V5.500A5.500 5.500 0 0114.500 11z" fill="#f2a134" />
    <path d="M17 9.500h4M23 9.500h5M17 13.500h4M23 13.500h5" stroke="#fff" strokeWidth="2" /><path d="M6 19h3M10 19h3" stroke="#f2a134" strokeWidth="2" /><ellipse cx="16" cy="25" rx="7" ry="5" fill="#d9dee2" stroke="#929ba3" />
  </svg>
);
const Bad = () => (<><circle cx="12" cy="12" r="4.800" fill="#dc3a30" stroke="#fff" strokeWidth=".6" /><path d="M10 10l4 4M14 10l-4 4" stroke="#fff" strokeWidth="1.500" /></>);

const combo = (w: number, f: number, child?: React.ReactNode) => (
  <Combo $w={w}><Field $w={f}>{child}</Field><Chevron /></Combo>
);
const Named = ({ children, launch }: { children: string; launch?: boolean }) => (
  <GroupName><NameText $shift={launch ? 3 : 1}>{children}</NameText>{launch && <Launcher />}</GroupName>
);

export default function App() {
  return (
    <>
      <Global />
      <Screen>
        <Window>
          <TitleBar>
            <QuickAccess>
              <svg width="14" height="14" viewBox="0 0 14 14"><path d="M.5 1.500h13v12H.5z" fill="#7a6cc4" stroke="#4b4392" /><path d="M3 1h8v6H3z" fill="#f2f4fb" /><path d="M3 9h8v5H3z" fill="#dadde8" /><path d="M5 10h2v3H5z" fill="#3a3780" /></svg>
              <svg width="16" height="14" viewBox="0 0 16 14"><path d="M4 5q6-5 8 0 1 4-4 7" fill="none" stroke="#2d65cf" strokeWidth="2.400" /><path d="M1 1v7h7z" fill="#2d65cf" /></svg>
              <svg width="16" height="14" viewBox="2 0 16 14"><path d="M12 5Q6 0 4 5q-1 4 4 7" fill="none" stroke="#aebcd0" strokeWidth="2.400" /><path d="M14 1v7H7z" fill="#aebcd0" /></svg>
            </QuickAccess>
            <Title>CapstoneReport.rdl - Microsoft SQL Server Report Builder</Title>
            <Controls>
              <svg width="60" height="12" viewBox="0 0 60 12">
                <path d="M1 9.500h7" stroke="#4d5666" strokeWidth="2" /><path d="M1 11.500h7" stroke="#fff" />
                <path d="M28.500 5V3.500h5v4H32" fill="none" stroke="#5d6776" /><path d="M28 3h6" stroke="#5d6776" strokeWidth="2" /><rect x="26.500" y="5.500" width="4" height="3" fill="#fff" stroke="#6f86ad" />
                <path d="M48.500 2.500l7 7M55.500 2.500l-7 7" stroke="#5c6470" strokeWidth="2" />
              </svg>
            </Controls>
          </TitleBar>
          <Tabs>
            <Tab $on $w={58}>Home</Tab>
            <Tab $w={70}>Insert</Tab>
            <Tab $w={54}>View</Tab>
            <HelpSlot>
              <svg width="15" height="15" viewBox="0 0 15 15"><circle cx="7.500" cy="7.500" r="6.500" fill="#e5effc" stroke="#7f93b8" /><circle cx="7.500" cy="7.500" r="5" fill="#2a5fd6" /><text x="7.500" y="11" textAnchor="middle" fontFamily="DejaVu Sans" fontSize="9" fontWeight="bold" fill="#fff">?</text></svg>
            </HelpSlot>
          </Tabs>
          <Ribbon>
            <Group $w={46}>
              <GroupBody $pad="1px 2px 0 3px"><BigTool $focus $w={38}><ReportRun /><ToolCaption>Run</ToolCaption></BigTool></GroupBody>
              <Named>Views</Named>
            </Group>
            <Group $w={73}>
              <GroupBody $pad="1px 2px 0 4px">
                <Row $gap={6}>
                  <BigTool $w={36}><PasteIcon /><ToolCaption $dim>Paste</ToolCaption></BigTool>
                  <GroupBody $pad="4px 0 0" $gap={8}><Cut /><CopyIcon /></GroupBody>
                </Row>
              </GroupBody>
              <Named>Clipboard</Named>
            </Group>
            <Group $w={159}>
              <GroupBody>
                <Row>{combo(103, 80)}{combo(44, 21)}</Row>
                <Row>
                  <ButtonSet><Tool $w={22}><Glyph t="B" /></Tool><Tool $w={22}><Glyph t="I" style="italic" /></Tool><Tool $w={20}><Glyph t="U" u /></Tool></ButtonSet>
                  <ButtonSet><Tool $w={31} $gap={2}><FontColor /><Down /></Tool></ButtonSet>
                  <ButtonSet><Tool $w={22}><FontStep up /></Tool><Tool $w={20}><FontStep /></Tool></ButtonSet>
                </Row>
              </GroupBody>
              <Named launch>Font</Named>
            </Group>
            <Group $w={122}>
              <GroupBody>
                <Row>
                  <ButtonSet><Tool $w={22}><Lines y={[2, 4, 6, 8]} /></Tool><Tool $w={22}><Lines y={[5, 7, 9, 11]} /></Tool><Tool $w={20}><Lines y={[8, 10, 12, 14]} /></Tool></ButtonSet>
                  <ButtonSet><Tool $w={22}><Indent out /></Tool><Tool $w={20}><Indent /></Tool></ButtonSet>
                </Row>
                <Row>
                  <ButtonSet><Tool $w={22}><Lines a="l" y={[3, 5, 7, 9, 11, 13]} /></Tool><Tool $w={22}><Lines y={[3, 5, 7, 9, 11, 13]} /></Tool><Tool $w={20}><Lines a="r" y={[3, 5, 7, 9, 11, 13]} /></Tool></ButtonSet>
                  <ButtonSet><Tool $w={22}><List /></Tool><Tool $w={20}><List num /></Tool></ButtonSet>
                </Row>
              </GroupBody>
              <Named launch>Paragraph</Named>
            </Group>
            <Group $w={107}>
              <GroupBody>
                <Row $gap={3}>{combo(64, 41, <Selected>1 pt</Selected>)}<ButtonSet><Tool $w={30} $gap={2}><Bucket /><Down /></Tool></ButtonSet></Row>
                <Row>
                  <ButtonSet>
                    <Tool $w={33} $gap={2}><svg width="20" height="16"><path d="M0 8.500h16" stroke="#75859c" /></svg><Down /></Tool>
                    <Tool $w={33} $gap={2}><Brush /><Down /></Tool>
                    <Tool $w={31} $gap={5}><Border /><Down /></Tool>
                  </ButtonSet>
                </Row>
              </GroupBody>
              <Named launch>Border</Named>
            </Group>
            <Group $w={159}>
              <GroupBody $pad="8px 4px 0">
                <Row>{combo(149, 126)}</Row>
                <Row>
                  <ButtonSet $live><Tool $w={31} $gap={4}><Bracket /><Down c="#3f67b0" /></Tool></ButtonSet>
                  <ButtonSet><Tool $w={21}><Glyph t="$" /></Tool><Tool $w={22}><Glyph t="%" /></Tool><Tool $w={20}><Comma /></Tool></ButtonSet>
                  <ButtonSet><Tool $w={21}><Decimals grow /></Tool><Tool $w={20}><Decimals /></Tool></ButtonSet>
                </Row>
              </GroupBody>
              <Named launch>Number</Named>
            </Group>
            <Group $w={76}>
              <GroupBody $pad="5px 0 0 9px">
                <LayoutItem><MergeIcon />Merge</LayoutItem>
                <LayoutItem><MergeIcon split />Split</LayoutItem>
                <LayoutItem><AlignIcon />Align&nbsp;<Down c="#5f86c4" /></LayoutItem>
              </GroupBody>
              <Named>Layout</Named>
            </Group>
          </Ribbon>

          <Work>
            <DataPanel>
              <PanelHead>Report Data
                <svg width="9" height="9" viewBox="0 0 9 9"><path d="M1 1l7 7M8 1L1 8" stroke="#17448f" strokeWidth="1.500" /></svg>
              </PanelHead>
              <PanelTools>
                <NewLabel>New</NewLabel><Down c="#000" w={6} /><Dim>Edit...</Dim>
                <svg width="70" height="14" viewBox="0 0 70 14">
                  <path d="M2 1.500l10 11M12 1L1 12.500" stroke="#2f3540" strokeWidth="2" />
                  <path d="M30 3.500l4.500 4h-2.500v4h-4v-4h-2.500zM53 11.500l4.500-4h-2.500v-4h-4v4h-2.500z" fill="#4b79e2" stroke="#2f56b5" strokeWidth=".6" />
                </svg>
              </PanelTools>
              <Tree>
                {tree.map(([d, k, t, tw], i) => (
                  <Node key={i} $depth={d} $sel={t === "GamesWon"}>
                    <Twist $w={d === 1 ? 16 : 15}>{tw && <Box plus={tw === "+"} />}</Twist>
                    <NodeIcon $w={d === 1 ? 20 : 21}>{kindIcon[k]}</NodeIcon>
                    <NodeText>{t}</NodeText>
                  </Node>
                ))}
              </Tree>
            </DataPanel>
            <Main>
              <Designer>
                <TopRuler><HorizontalRuler /></TopRuler>
                <Canvas>
                  <SideRuler><VerticalRuler /></SideRuler>
                  <Surface><Margin><Streaks /></Margin><Paper><Chart /></Paper></Surface>
                  <Scroll>
                    <ScrollEnd><svg width="9" height="6"><path d="M1 5l3.500-3.500L8 5" fill="none" stroke="#606060" strokeWidth="1.600" /></svg></ScrollEnd>
                    <ScrollTrack><Thumb><svg width="7" height="8"><path d="M0 1h7M0 4h7M0 7h7" stroke="#606060" strokeWidth="2" /></svg></Thumb></ScrollTrack>
                    <ScrollEnd><svg width="9" height="6"><path d="M1 1l3.500 3.500L8 1" fill="none" stroke="#606060" strokeWidth="1.600" /></svg></ScrollEnd>
                  </Scroll>
                </Canvas>
              </Designer>
              <Groups>
                <GroupPane $w={572}>
                  <PaneHead><PaneIcon /><PaneTitle>Row Groups</PaneTitle></PaneHead>
                  <PaneBox>
                    <DetailRow>
                      <svg width="12" height="9"><path d="M3 2.500h6M3 4.500h6M3 6.500h6" stroke="#666" /></svg>
                      <DetailText>(Details)</DetailText><DropCell><Down c="#000" w={7} /></DropCell>
                    </DetailRow>
                  </PaneBox>
                </GroupPane>
                <GroupPane $w={571}>
                  <PaneHead><PaneIcon cols /><PaneTitle>Column Groups</PaneTitle><Down c="#000" w={7} /></PaneHead>
                  <PaneBox />
                </GroupPane>
              </Groups>
            </Main>
          </Work>
          <Status>
            <svg width="16" height="16" viewBox="0 0 16 16"><path d="M1.500.5h8v14h-8z" fill="#e8ecf2" stroke="#69768a" /><path d="M3 3.500h5M3 6.500h5" stroke="#69768a" /><circle cx="11.500" cy="11" r="4" fill="#dff1dc" stroke="#3f7f3c" /><path d="M10.500 8.500v5l3-2.500z" fill="#24902a" /></svg>
            <StatusText>Current report server http://localhost/ReportServer</StatusText>
            <StatusLink>Disconnect</StatusLink>
            <ZoomEdge><Amber /></ZoomEdge>
          </Status>
          <Orb>
            <svg width="40" height="40" viewBox="0 0 40 40">
              <defs><linearGradient id="orb" x2="0" y2="1"><stop stopColor="#fafafa" /><stop offset=".45" stopColor="#d9dbdf" /><stop offset=".5" stopColor="#b8bdc6" /><stop offset="1" stopColor="#f3f4f6" /></linearGradient></defs>
              <circle cx="19.500" cy="20.500" r="18.500" fill="#8a93a2" opacity=".45" /><circle cx="19.500" cy="19.500" r="18" fill="url(#orb)" stroke="#8f97a4" /><circle cx="19.500" cy="19.500" r="14" fill="#e0e2e6" opacity=".6" />
              <path d="M18 20V10a10.200 10.200 0 1010.500 10z" fill="#85888d" /><path d="M20.500 17.500v-9a9.500 9.500 0 019 9z" fill="#5d6166" stroke="#fff" />
            </svg>
          </Orb>
        </Window>
        <Taskbar>
          <Start><WinLogo /></Start>
          <TaskButton><ServerIcon /></TaskButton>
          <TaskButton><PowerShell /></TaskButton>
          <TaskButton $state="open"><Explorer /></TaskButton>
          <TaskButton><Chrome /></TaskButton>
          <TaskButton><Notepad /></TaskButton>
          <TaskButton $state="open"><VisualStudio /></TaskButton>
          <TaskButton $state="open"><IE /></TaskButton>
          <TaskButton $state="active"><Builder /></TaskButton>
          <TaskButton $state="open"><Tools /></TaskButton>
          <TaskButton $state="open"><Panel /></TaskButton>
          <Tray>
            <svg width="92" height="18" viewBox="0 0 92 18">
              <path d="M1 11h7L4.500 7z" fill="#182a32" />
              <path d="M21.500 1v15" stroke="#fff" strokeWidth="2" /><path d="M22.500 2.500h6l2 2h4v8h-6l-2-2h-4z" fill="#eaf6fa" stroke="#5d717b" strokeWidth=".8" /><g transform="translate(19)"><Bad /></g>
              <path d="M50.500 4.500h9v8h-12v-4M50 15.500h8M54.500 12v4" fill="none" stroke="#fff" strokeWidth="2.600" /><path d="M50.500 4.500h9v8h-10v-4M50 15.500h8M54.500 12v4" fill="none" stroke="#34535f" /><rect x="45.500" y="1.500" width="4" height="5" fill="#fff" stroke="#34535f" /><path d="M47.500 6v8" stroke="#34535f" />
              <path d="M69.500 6h3l5-4.500v15L72.500 12h-3z" fill="#fff" stroke="#5d717b" strokeWidth=".8" /><g transform="translate(67)"><Bad /></g>
            </svg>
            <Clock>7:44 PM<br />2016-12-16</Clock>
          </Tray>
        </Taskbar>
        <Recorder>
          <RecorderHead><RecorderName>UIMap - Coded UI Test Builder</RecorderName><Bold>?</Bold>
            <svg width="11" height="10" viewBox="0 0 11 10"><path d="M1 1l9 8M10 1L1 9" stroke="#f1f1f1" strokeWidth="2.300" /></svg>
          </RecorderHead>
          <RecorderTools>
            <RecCell $w={83} $line $pad={22}>
              <svg width="50" height="13" viewBox="0 0 50 13"><rect x="0" y="1" width="11" height="11" fill="#f03a2c" /><circle cx="5.500" cy="6.500" r="2.500" fill="none" stroke="#4d0d08" strokeWidth="1.500" /><path d="M32 12V9h5V6h5V3h6V1v11z" fill="#56565a" /></svg>
            </RecCell>
            <RecCell $w={39} $line $pad={12}>
              <svg width="15" height="15" viewBox="0 0 15 15"><circle cx="7.500" cy="7.500" r="5.800" fill="none" stroke="#c0c0c0" strokeWidth="2.200" /><circle cx="7.500" cy="7.500" r="2" fill="#d5d5d5" /></svg>
            </RecCell>
            <RecCell $w={40} $pad={9}>
              <svg width="18" height="18" viewBox="0 0 18 18"><path d="M8 1.500h9M10 5.500h5M8 9h3M8 11.500h9M4 15.500h9" stroke="#c8c8c8" strokeWidth="2.200" /><path d="M0 4h4V1l5 4.500L4 10V7H0z" fill="#4fa3ec" stroke="#2d2d30" strokeWidth=".5" /></svg>
            </RecCell>
          </RecorderTools>
        </Recorder>
      </Screen>
    </>
  );
}
